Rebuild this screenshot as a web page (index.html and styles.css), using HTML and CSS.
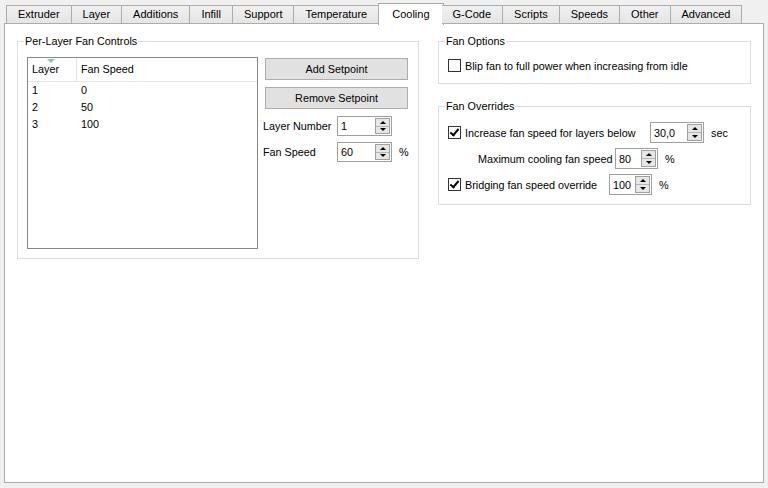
FILE: index.html
```html
<!DOCTYPE html>
<html lang="en">
<head>
    <meta charset="UTF-8">
    <title>Cooling</title>
    <link rel="stylesheet" href="styles.css">
</head>
<body>
    <div class="window">
        <div class="tabbar">
            <div class="tab">Extruder</div>
            <div class="tab">Layer</div>
            <div class="tab">Additions</div>
            <div class="tab">Infill</div>
            <div class="tab">Support</div>
            <div class="tab">Temperature</div>
            <div class="tab active">Cooling</div>
            <div class="tab">G-Code</div>
            <div class="tab">Scripts</div>
            <div class="tab">Speeds</div>
            <div class="tab">Other</div>
            <div class="tab">Advanced</div>
        </div>

        <div class="pane">
            <!-- left column -->
            <div class="group group-layers">
                <span class="group-title">Per-Layer Fan Controls</span>
                <div class="listview">
                    <div class="list-head">
                        <div class="col col-layer">Layer<span class="sort-arrow"></span></div>
                        <div class="col col-speed">Fan Speed</div>
                    </div>
                    <div class="list-row"><div class="col col-layer">1</div><div class="col col-speed">0</div></div>
                    <div class="list-row"><div class="col col-layer">2</div><div class="col col-speed">50</div></div>
                    <div class="list-row"><div class="col col-layer">3</div><div class="col col-speed">100</div></div>
                </div>
                <div class="controls">
                    <button class="btn">Add Setpoint</button>
                    <button class="btn">Remove Setpoint</button>
                    <div class="field-row">
                        <span class="field-label">Layer Number</span>
                        <div class="spin spin-left">
                            <span class="spin-value">1</span>
                            <span class="spin-arrows"><span class="arr up"></span><span class="arr down"></span></span>
                        </div>
                    </div>
                    <div class="field-row">
                        <span class="field-label">Fan Speed</span>
                        <div class="spin spin-left">
                            <span class="spin-value">60</span>
                            <span class="spin-arrows"><span class="arr up"></span><span class="arr down"></span></span>
                        </div>
                        <span class="unit">%</span>
                    </div>
                </div>
            </div>

            <!-- right column -->
            <div class="col-right">
                <div class="group group-options">
                    <span class="group-title">Fan Options</span>
                    <div class="check-row">
                        <span class="checkbox"></span>
                        <span class="check-label">Blip fan to full power when increasing from idle</span>
                    </div>
                </div>

                <div class="group group-overrides">
                    <span class="group-title">Fan Overrides</span>
                    <div class="check-row">
                        <span class="checkbox checked"></span>
                        <span class="check-label lbl-below">Increase fan speed for layers below</span>
                        <div class="spin spin-sec">
                            <span class="spin-value">30,0</span>
                            <span class="spin-arrows"><span class="arr up"></span><span class="arr down"></span></span>
                        </div>
                        <span class="unit">sec</span>
                    </div>
                    <div class="check-row indent">
                        <span class="check-label lbl-max">Maximum cooling fan speed</span>
                        <div class="spin spin-max">
                            <span class="spin-value">80</span>
                            <span class="spin-arrows"><span class="arr up"></span><span class="arr down"></span></span>
                        </div>
                        <span class="unit">%</span>
                    </div>
                    <div class="check-row">
                        <span class="checkbox checked"></span>
                        <span class="check-label lbl-bridge">Bridging fan speed override</span>
                        <div class="spin spin-bridge">
                            <span class="spin-value">100</span>
                            <span class="spin-arrows"><span class="arr up"></span><span class="arr down"></span></span>
                        </div>
                        <span class="unit">%</span>
                    </div>
                </div>
            </div>
        </div>
    </div>
</body>
</html>
```

FILE: styles.css
```css
body {
    margin: 0;
    padding: 0;
    background: #f0f0f0;
    font-family: 'Liberation Sans', Arial, sans-serif;
    font-size: 10.8px;
    color: #000000;
}
.window {
    width: 768px;
    height: 488px;
    box-sizing: border-box;
    padding: 3px 4px 0 4px;
}

/* Tabs */
.tabbar {
    display: flex;
    height: 21px;
    padding-left: 2px;
    position: relative;
    z-index: 1;
    font-size: 11px;
}
.tab {
    height: 19px;
    margin-top: 2px;
    padding: 0 11px;
    box-sizing: border-box;
    border: 1px solid #acacac;
    border-left: none;
    background: linear-gradient(#f0f0f0, #e5e5e5);
    line-height: 17px;
    text-align: center;
}
.tab:first-child {
    border-left: 1px solid #acacac;
}
.tab.active {
    height: 22px;
    margin-top: 0;
    margin-left: -1px;
    margin-right: -2px;
    padding: 0 13px;
    border: 1px solid #acacac;
    border-bottom: none;
    background: #ffffff;
    line-height: 20px;
}
.tab.active + .tab {
    border-left: none;
}

.pane {
    height: 460px;
    box-sizing: border-box;
    border: 1px solid #acacac;
    background: #ffffff;
    margin-top: -1px;
    padding: 17px 0 0 12px;
    display: flex;
    align-items: flex-start;
    gap: 19px;
}

/* Group boxes */
.group {
    position: relative;
    border: 1px solid #dcdcdc;
    box-sizing: border-box;
}
.group-title {
    position: absolute;
    top: -8px;
    left: 6px;
    padding: 0 1px;
    background: #ffffff;
    line-height: 14px;
}
.group-layers {
    width: 402px;
    height: 218px;
    display: flex;
    align-items: flex-start;
    padding: 15px 0 0 9px;
}
.col-right {
    display: flex;
    flex-direction: column;
    gap: 22px;
}
.group-options {
    width: 313px;
    height: 43px;
    padding: 17px 0 0 9px;
}
.group-overrides {
    width: 313px;
    height: 99px;
    padding: 15px 0 0 9px;
    display: flex;
    flex-direction: column;
    gap: 5px;
}

/* List view */
.listview {
    width: 231px;
    height: 192px;
    box-sizing: border-box;
    border: 1px solid #828790;
    background: #ffffff;
}
.list-head {
    display: flex;
    height: 23px;
    border-bottom: 1px solid #e5e5e5;
    line-height: 23px;
}
.list-head .col-layer {
    border-right: 1px solid #e5e5e5;
    position: relative;
}
.sort-arrow {
    position: absolute;
    top: 1px;
    left: 19px;
    width: 0;
    height: 0;
    border-left: 4px solid transparent;
    border-right: 4px solid transparent;
    border-top: 4px solid #97b7d8;
}
.list-row {
    display: flex;
    height: 17px;
    line-height: 17px;
}
.col {
    padding-left: 4px;
    box-sizing: border-box;
}
.col-layer {
    width: 49px;
}

/* Right-side controls */
.controls {
    margin-left: 5px;
    margin-top: 1px;
    display: flex;
    flex-direction: column;
}
.btn {
    width: 143px;
    height: 22px;
    margin: 0 0 7px 2px;
    border: 1px solid #adadad;
    background: #e1e1e1;
    font-family: inherit;
    font-size: 10.8px;
    color: #000000;
    padding: 0;
}
.field-row {
    display: flex;
    align-items: center;
    height: 20px;
    margin-bottom: 6px;
}
.field-label {
    width: 74px;
    flex-shrink: 0;
}
.unit {
    margin-left: 7px;
}

/* Spin boxes */
.spin {
    display: flex;
    flex-shrink: 0;
    height: 20px;
    box-sizing: border-box;
    border: 1px solid #a0a0a0;
    background: #ffffff;
}
.spin-left {
    width: 55px;
}
.spin-sec {
    width: 54px;
    height: 21px;
}
.spin-max {
    width: 43px;
    height: 21px;
}
.spin-bridge {
    width: 43px;
    height: 21px;
}
.spin-value {
    flex: 1;
    padding-left: 3px;
    align-self: center;
}
.spin-arrows {
    width: 13px;
    margin: 1px 1px 1px 0;
    border: 1px solid #a0a0a0;
    display: flex;
    flex-direction: column;
    background: #e6e6e6;
}
.arr {
    flex: 1;
    display: flex;
    align-items: center;
    justify-content: center;
}
.arr.up {
    border-bottom: 1px solid #b5b5b5;
}
.arr::after {
    content: "";
    width: 0;
    height: 0;
    border-left: 3px solid transparent;
    border-right: 3px solid transparent;
}
.arr.up::after {
    border-bottom: 3px solid #000000;
}
.arr.down::after {
    border-top: 3px solid #000000;
}

/* Check boxes */
.check-row {
    display: flex;
    align-items: center;
    height: 21px;
}
.group-options .check-row {
    height: 13px;
}
.checkbox {
    width: 13px;
    height: 13px;
    flex-shrink: 0;
    box-sizing: border-box;
    border: 1px solid #333333;
    background: #ffffff;
    margin-right: 4px;
    position: relative;
}
.checkbox.checked::after {
    content: "";
    position: absolute;
    left: 3px;
    top: 0px;
    width: 3px;
    height: 7px;
    border-right: 2px solid #000000;
    border-bottom: 2px solid #000000;
    transform: rotate(40deg);
}
.indent {
    padding-left: 30px;
}
.check-label {
    flex-shrink: 0;
}
.lbl-below {
    width: 185px;
}
.lbl-max {
    width: 137px;
}
.lbl-bridge {
    width: 144px;
}
```
